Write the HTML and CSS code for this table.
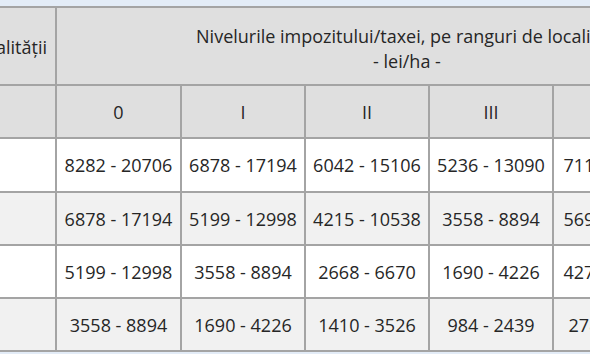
FILE: index.html
```html
<!DOCTYPE html>
<html lang="ro">
<head>
<meta charset="utf-8">
<link rel="stylesheet" href="styles.css">
</head>
<body>
<div class="page">
  <div class="table">
    <div class="cell head zone"><span>Zona în cadrul localității</span></div>
    <div class="cell head title">Nivelurile impozitului/taxei, pe ranguri de localități<br>- lei/ha -</div>

    <div class="cell head"></div>
    <div class="cell head">0</div>
    <div class="cell head">I</div>
    <div class="cell head">II</div>
    <div class="cell head">III</div>
    <div class="cell head">IV</div>
    <div class="cell head">V</div>

    <div class="cell"></div>
    <div class="cell">8282 - 20706</div>
    <div class="cell">6878 - 17194</div>
    <div class="cell">6042 - 15106</div>
    <div class="cell">5236 - 13090</div>
    <div class="cell">711 - 1788</div>
    <div class="cell">569 - 1422</div>

    <div class="cell alt"></div>
    <div class="cell alt">6878 - 17194</div>
    <div class="cell alt">5199 - 12998</div>
    <div class="cell alt">4215 - 10538</div>
    <div class="cell alt">3558 - 8894</div>
    <div class="cell alt">569 - 1422</div>
    <div class="cell alt">427 - 1068</div>

    <div class="cell"></div>
    <div class="cell">5199 - 12998</div>
    <div class="cell">3558 - 8894</div>
    <div class="cell">2668 - 6670</div>
    <div class="cell">1690 - 4226</div>
    <div class="cell">427 - 1068</div>
    <div class="cell">284 - 710</div>

    <div class="cell alt"></div>
    <div class="cell alt">3558 - 8894</div>
    <div class="cell alt">1690 - 4226</div>
    <div class="cell alt">1410 - 3526</div>
    <div class="cell alt">984 - 2439</div>
    <div class="cell alt">278 - 696</div>
    <div class="cell alt">142 - 356</div>
  </div>
</div>
</body>
</html>
```

FILE: styles.css
```css
html, body {
  margin: 0;
  padding: 0;
}
body {
  width: 590px;
  height: 354px;
  overflow: hidden;
  background: #e3ecf7;
  font-family: "Open Sans", "Noto Sans", sans-serif;
  color: #262626;
}
.page {
  padding-top: 6px;
  width: 590px;
  overflow: hidden;
}
.table {
  display: grid;
  grid-template-columns: 55px 123px 122px 122px 122px 106px 95px;
  grid-template-rows: 76px 51px 52px 51px 51px 51px;
  gap: 2px;
  padding: 2px 0;
  background: #a4a4a4;
  width: max-content;
}
.cell {
  background: #ffffff;
  display: flex;
  align-items: center;
  justify-content: center;
  font-size: 18px;
  white-space: nowrap;
  overflow: hidden;
}
.cell.alt {
  background: #f1f1f1;
}
.cell.head {
  background: #dfdfdf;
}
.zone {
  justify-content: flex-end;
  padding-right: 8px;
  padding-top: 2px;
}
.title {
  grid-column: 2 / -1;
  text-align: center;
  line-height: 25px;
  padding-top: 5px;
}
```
